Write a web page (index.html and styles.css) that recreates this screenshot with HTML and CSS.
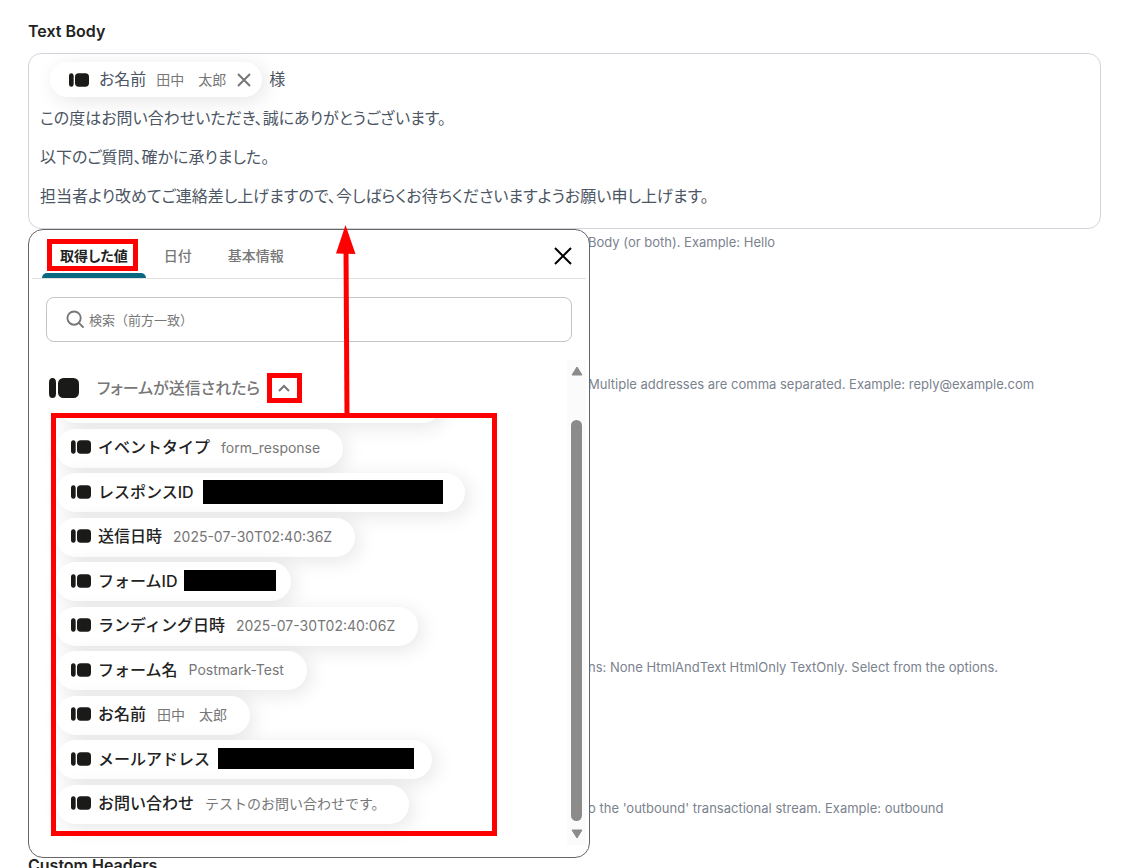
FILE: index.html
```html
<!DOCTYPE html>
<html lang="ja">
<head>
<meta charset="utf-8">
<title>Text Body</title>
<link rel="stylesheet" href="styles.css">
</head>
<body>

<svg class="defs" aria-hidden="true">
	<symbol id="form-icon" viewBox="0 0 30 20">
		<rect x="0" y="0" width="7" height="20" rx="3.5" ry="4.5"/>
		<rect x="9" y="0" width="21" height="20" rx="5.5"/>
	</symbol>
</svg>

<main class="form">
	<section class="field">
		<h2 class="field-label" id="body-label">Text Body</h2>
		<div class="editor" role="textbox" aria-multiline="true" aria-labelledby="body-label" contenteditable="true">
			<p class="first"><span class="token" contenteditable="false"><svg class="icon"><use href="#form-icon"/></svg><span class="token-name">お名前</span><span class="value">田中　太郎</span><button class="token-remove" type="button" aria-label="削除"><svg viewBox="0 0 14 14"><path d="M1 1L13 13M13 1L1 13"/></svg></button></span>様</p>
			<p>この度はお問い合わせいただき、誠にありがとうございます。</p>
			<p>以下のご質問、確かに承りました。</p>
			<p>担当者より改めてご連絡差し上げますので、今しばらくお待ちくださいますようお願い申し上げます。</p>
		</div>
	</section>

	<div class="below">
		<div class="hints">
			<p>Body (or both). Example: Hello</p>
			<p>Multiple addresses are comma separated. Example: reply@example.com</p>
			<p></p>
			<p>ns: None HtmlAndText HtmlOnly TextOnly. Select from the options.</p>
			<p>o the 'outbound' transactional stream. Example: outbound</p>
		</div>

		<div class="popup">
			<div class="tabs">
				<button class="tab active" type="button">取得した値</button>
				<button class="tab" type="button">日付</button>
				<button class="tab" type="button">基本情報</button>
				<button class="close" type="button" aria-label="閉じる"><svg viewBox="0 0 18 18"><path d="M1 1L17 17M17 1L1 17"/></svg></button>
			</div>

			<label class="search">
				<svg viewBox="0 0 20 20"><circle cx="8.5" cy="8.5" r="7"/><path d="M13.5 13.5L18.5 18.5"/></svg>
				<input type="text" placeholder="検索（前方一致）" aria-label="検索">
			</label>

			<div class="results">
				<div class="group">
					<div class="group-head">
						<svg class="group-icon"><use href="#form-icon"/></svg>
						<h3 class="group-name">フォームが送信されたら</h3>
						<button class="toggle" type="button" aria-label="折りたたむ"><svg viewBox="0 0 12 8"><path d="M1 7L6 2L11 7"/></svg></button>
					</div>
					<ul class="chips">
						<li class="chip chip-cut"></li>
						<li class="chip"><svg class="icon"><use href="#form-icon"/></svg><b>イベントタイプ</b><span class="value">form_response</span></li>
						<li class="chip chip-response"><svg class="icon"><use href="#form-icon"/></svg><b>レスポンスID</b><span class="mask"></span></li>
						<li class="chip"><svg class="icon"><use href="#form-icon"/></svg><b>送信日時</b><span class="value">2025-07-30T02:40:36Z</span></li>
						<li class="chip chip-form"><svg class="icon"><use href="#form-icon"/></svg><b>フォームID</b><span class="mask"></span></li>
						<li class="chip"><svg class="icon"><use href="#form-icon"/></svg><b>ランディング日時</b><span class="value">2025-07-30T02:40:06Z</span></li>
						<li class="chip"><svg class="icon"><use href="#form-icon"/></svg><b>フォーム名</b><span class="value">Postmark-Test</span></li>
						<li class="chip"><svg class="icon"><use href="#form-icon"/></svg><b>お名前</b><span class="value">田中　太郎</span></li>
						<li class="chip chip-mail"><svg class="icon"><use href="#form-icon"/></svg><b>メールアドレス</b><span class="mask"></span></li>
						<li class="chip"><svg class="icon"><use href="#form-icon"/></svg><b>お問い合わせ</b><span class="value">テストのお問い合わせです。</span></li>
					</ul>
				</div>
				<div class="scrollbar">
					<svg viewBox="0 0 12 10"><path d="M6 1L11 9H1Z"/></svg>
					<span class="thumb"></span>
					<svg viewBox="0 0 12 10"><path d="M6 9L1 1H11Z"/></svg>
				</div>
			</div>
		</div>

		<!-- red marks: selected tab, toggle, values, arrow to the body -->
		<svg class="marks" viewBox="0 0 562 640" aria-hidden="true">
			<rect x="21.5" y="22.5" width="86" height="27"/>
			<rect x="241.5" y="156.5" width="30" height="25"/>
			<rect x="25.5" y="196.5" width="441" height="418"/>
			<path d="M318 30L319 197"/>
			<polygon points="317.5,6 327.5,35 308,34.5"/>
		</svg>
	</div>

	<section class="field">
		<h2 class="field-label">Custom Headers</h2>
	</section>
</main>

</body>
</html>
```

FILE: styles.css
```css
* {
	box-sizing: border-box;
}

body {
	margin: 0;
	overflow: hidden;
	background: #fff;
	color: #222;
	font-family: Inter, "Noto Sans CJK JP", sans-serif;
}

h2, h3, p, ul {
	margin: 0;
	padding: 0;
}

button {
	padding: 0;
	border: none;
	background: none;
	color: inherit;
	font-family: inherit;
	cursor: pointer;
}

svg {
	flex: none;
}

.defs {
	position: absolute;
	width: 0;
	height: 0;
}

.form {
	padding: 21px 29px 0 28px;
}

.field-label {
	font-size: 16px;
	font-weight: 600;
	line-height: 20px;
}

/* editor */
.editor {
	margin-top: 12px;
	padding: 6px 11px 12px;
	border: 1px solid #d1d5db;
	border-radius: 13px;
	outline: none;
	color: #4b5563;
	font-size: 16px;
	font-feature-settings: "palt";
}

.editor p {
	line-height: 39px;
}

.editor .first {
	display: flex;
	align-items: center;
}

.token {
	display: flex;
	align-items: center;
	height: 35px;
	margin: 0 7px 0 10px;
	padding: 0 11px 0 19px;
	border-radius: 18px;
	background: #fff;
	box-shadow: 4px 4px 20px rgba(0, 0, 0, 0.1);
}

.icon {
	width: 20px;
	height: 14px;
	fill: #1a1a18;
}

.token-name {
	margin: 0 10px;
}

.value {
	color: #777;
	font-size: 14px;
}

.token-remove {
	display: flex;
	margin-left: 11px;
}

.token-remove svg {
	width: 14px;
	height: 14px;
	fill: none;
	stroke: #777;
	stroke-width: 2;
}

/* hints */
.below {
	position: relative;
}

.hints {
	display: flex;
	flex-direction: column;
	justify-content: space-between;
	height: 626px;
	padding: 3px 0 37px 560px;
	color: #7b828e;
	font-size: 13px;
}

.hints p {
	height: 20px;
	line-height: 20px;
}

/* popup */
.popup {
	position: absolute;
	top: 0;
	left: 0;
	width: 562px;
	padding: 0 3px 12px;
	border: 1px solid #666;
	border-radius: 15px;
	background: #fff;
}

.tabs {
	display: flex;
	height: 49px;
	padding: 0 14px 0 10px;
	border-bottom: 1px solid #e0e0e0;
}

.tab {
	position: relative;
	padding: 2px 18px 0;
	color: #777;
	font-size: 14px;
	font-weight: 500;
	font-feature-settings: "palt";
}

.tab.active {
	color: #222;
	font-weight: 700;
}

.tab.active::after {
	content: "";
	position: absolute;
	right: 0;
	bottom: 0;
	left: 0;
	height: 5px;
	border-radius: 5px 5px 0 0;
	background: #0a6880;
}

.close {
	margin-left: auto;
}

.close svg {
	display: block;
	width: 18px;
	height: 18px;
	margin-top: 4px;
	fill: none;
	stroke: #000;
	stroke-width: 2;
}

.search {
	display: flex;
	align-items: center;
	gap: 4px;
	height: 45px;
	margin: 18px 14px;
	padding: 0 19px;
	border: 1px solid #c4c4c4;
	border-radius: 8px;
}

.search svg {
	width: 19px;
	height: 19px;
	fill: none;
	stroke: #777;
	stroke-width: 2;
}

.search input {
	flex: 1;
	border: none;
	padding: 0;
	outline: none;
	background: none;
	font-family: inherit;
	font-size: 13px;
}

.search input::placeholder {
	color: #777;
}

.results {
	display: flex;
	height: 485px;
}

.group {
	flex: 1;
	display: flex;
	flex-direction: column;
}

.group-head {
	display: flex;
	align-items: center;
	height: 55px;
	padding-left: 17px;
}

.group-icon {
	width: 30px;
	height: 20px;
	fill: #1a1a18;
}

.group-name {
	margin: 0 18px 0 18px;
	padding-bottom: 2px;
	color: #777;
	font-size: 16px;
	font-weight: 500;
	font-feature-settings: "palt";
}

.toggle svg {
	display: block;
	width: 12px;
	height: 8px;
	fill: none;
	stroke: #777;
	stroke-width: 2;
}

.chips {
	flex: 1;
	display: flex;
	flex-direction: column;
	align-items: flex-start;
	justify-content: space-between;
	overflow: hidden;
	padding: 0 0 21px 24px;
	list-style: none;
}

.chip {
	display: flex;
	align-items: center;
	flex: none;
	height: 39px;
	padding: 0 23px 2px 15px;
	border-radius: 20px;
	background: #fff;
	box-shadow: 4px 4px 20px rgba(0, 0, 0, 0.1);
}

.chip b {
	margin: 0 11px 0 7px;
	padding-bottom: 2px;
	font-size: 16px;
	font-weight: 500;
}

.chip-cut {
	width: 386px;
	margin-top: -31px;
}

.chip-response {
	width: 409px;
	padding-right: 22px;
}

.chip-form {
	width: 235px;
	padding-right: 15px;
}

.chip-mail {
	width: 376px;
	padding-right: 18px;
}

.chip-response b,
.chip-form b,
.chip-mail b {
	margin-right: 0;
}

.mask {
	width: 92px;
	height: 21px;
	margin-left: auto;
	background: #000;
}

.chip-response .mask {
	width: 240px;
	height: 24px;
}

.chip-mail .mask {
	width: 196px;
}

.scrollbar {
	display: flex;
	flex-direction: column;
	align-items: center;
	width: 19px;
	padding: 6px 0;
	background: #fbfbfb;
}

.scrollbar svg {
	width: 12px;
	height: 10px;
	fill: #8b8b8b;
	stroke: #8b8b8b;
	stroke-linejoin: round;
}

.thumb {
	flex: 1;
	width: 11px;
	margin: 44px 0 8px;
	border-radius: 6px;
	background: #8b8b8b;
}

/* marks start 10px above the popup so that the arrow reaches the editor */
.marks {
	position: absolute;
	top: -10px;
	left: 0;
	width: 562px;
	height: 640px;
	fill: none;
	stroke: #f00;
	stroke-width: 5;
	pointer-events: none;
}

.marks polygon {
	fill: #f00;
	stroke: none;
}
```
